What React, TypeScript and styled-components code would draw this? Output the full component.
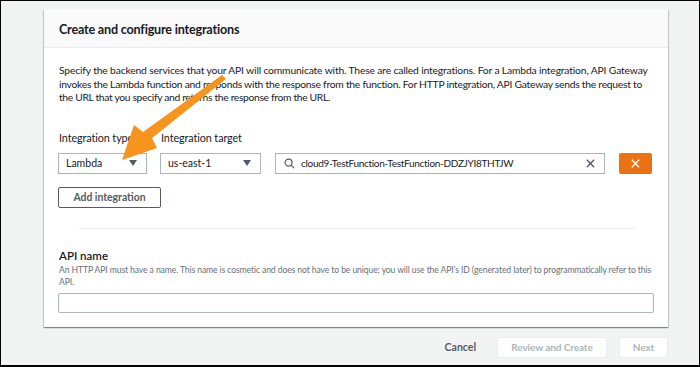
import React from 'react'
import styled, {createGlobalStyle} from 'styled-components'

const GlobalStyle = createGlobalStyle`
  html, body {
    margin: 0;
    padding: 0;
    background: #000;
  }
  * {
    box-sizing: border-box;
  }
`

const Page = styled.div`
  position: relative;
  width: 700px;
  height: 367px;
  border: 1px solid #000;
  border-bottom-width: 2px;
  background: #f2f3f3;
  padding: 8px 31px 0 43px;
  font-family: Lato, 'Liberation Sans', sans-serif;
  color: #16191f;
  overflow: hidden;
`

const Card = styled.section`
  background: #fff;
  box-shadow: 0 1px 1px 0 rgba(0, 28, 36, 0.3), 1px 1px 1px 0 rgba(0, 28, 36, 0.15), -1px 1px 1px 0 rgba(0, 28, 36, 0.15);
`

const CardHeader = styled.header`
  height: 39px;
  display: flex;
  align-items: center;
  padding: 3px 15px 0;
  background: #fafafa;
  border-bottom: 1px solid #eaeded;
`

const Title = styled.h2`
  margin: 0;
  font-size: 12.6px;
  font-weight: 700;
  letter-spacing: -0.2px;
  white-space: nowrap;
`

const CardBody = styled.div`
  padding: 16px 14px 14px 15px;
`

const Description = styled.p`
  margin: 0;
  font-size: 10.3px;
  line-height: 13.5px;
  white-space: nowrap;
`

const Line = styled.span<{ $spacing: number }>`
  display: block;
  letter-spacing: ${(p) => p.$spacing}px;
`

const FieldRow = styled.div`
  display: flex;
  align-items: flex-end;
  gap: 14px;
  margin-top: 25px;
`

const Field = styled.div`
  display: flex;
  flex-direction: column;
  gap: 7px;
`

const Label = styled.label`
  font-size: 10.8px;
  letter-spacing: -0.1px;
  line-height: 16px;
  white-space: nowrap;
`

const Select = styled.div<{ $width: number }>`
  width: ${(p) => p.$width}px;
  height: 21px;
  display: flex;
  align-items: center;
  justify-content: space-between;
  padding: 0 8px 0 7px;
  border: 1px solid #aab7b8;
  font-size: 10.5px;
  margin-left: -1px;
`

const Caret = styled.span`
  width: 0;
  height: 0;
  border-left: 4px solid transparent;
  border-right: 4px solid transparent;
  border-top: 6px solid #545b64;
  margin-right: 1px;
`

const SearchBox = styled.div`
  width: 330px;
  height: 21px;
  display: flex;
  align-items: center;
  gap: 6px;
  padding: 0 8px 0 8px;
  border: 1px solid #aab7b8;
  font-size: 10px;
  letter-spacing: -0.3px;
`

const SearchText = styled.span`
  flex: 1;
  white-space: nowrap;
`

const RemoveButton = styled.button`
  width: 33px;
  height: 21px;
  border: none;
  border-radius: 2px;
  background: #ec7211;
  display: flex;
  align-items: center;
  justify-content: center;
  padding: 0;
`

const SecondaryButton = styled.button`
  margin-top: 13px;
  margin-left: -1px;
  height: 21px;
  width: 103px;
  padding: 0;
  border: 1px solid #545b64;
  border-radius: 2px;
  background: #fff;
  font-family: inherit;
  font-size: 10.4px;
  font-weight: 700;
  color: #545b64;
`

const Divider = styled.hr`
  margin: 20px 19px 0 20px;
  border: none;
  border-top: 1px solid #eaeded;
`

const NameLabel = styled.div`
  margin-top: 19px;
  font-size: 11.5px;
  font-weight: 600;
  line-height: 16px;
`

const Hint = styled.div`
  font-size: 8.6px;
  letter-spacing: -0.1px;
  line-height: 12px;
  color: #687078;
  white-space: nowrap;
`

const TextInput = styled.div`
  margin-top: 5px;
  margin-left: -1px;
  height: 20px;
  border: 1px solid #aab7b8;
  border-radius: 2px;
`

const Footer = styled.footer`
  display: flex;
  justify-content: flex-end;
  align-items: center;
  gap: 12px;
  margin-top: 10px;
`

const LinkButton = styled.button`
  border: none;
  background: none;
  padding: 0;
  font-family: inherit;
  font-size: 10.5px;
  font-weight: 700;
  color: #545b64;
  margin-right: 9px;
`

const DisabledButton = styled.button<{ $width: number }>`
  width: ${(p) => p.$width}px;
  height: 21px;
  padding: 0;
  border: 1px solid #eaeded;
  border-radius: 2px;
  background: #fff;
  font-family: inherit;
  font-size: 10px;
  letter-spacing: -0.1px;
  font-weight: 700;
  color: #aab7b8;
  white-space: nowrap;
`

const Arrow = styled.svg`
  position: absolute;
  left: 0;
  top: 0;
  pointer-events: none;
`

const XIcon = ({color, size}: {color: string; size: number}) => (
  <svg width={size} height={size} viewBox="0 0 12 12">
    <path d="M2 2 L10 10 M10 2 L2 10" stroke={color} strokeWidth="1.5" fill="none" />
  </svg>
)

const App: React.FC = () => {
  return (
    <>
      <GlobalStyle />
      <Page>
        <Card>
          <CardHeader>
            <Title>Create and configure integrations</Title>
          </CardHeader>
          <CardBody>
            <Description>
              <Line $spacing={-0.15}>
                Specify the backend services that your API will communicate with. These are called integrations. For a Lambda integration, API Gateway
              </Line>
              <Line $spacing={-0.25}>
                invokes the Lambda function and responds with the response from the function. For HTTP integration, API Gateway sends the request to
              </Line>
              <Line $spacing={-0.33}>the URL that you specify and returns the response from the URL.</Line>
            </Description>
            <FieldRow>
              <Field>
                <Label>Integration type</Label>
                <Select $width={89}>
                  Lambda
                  <Caret />
                </Select>
              </Field>
              <Field>
                <Label>Integration target</Label>
                <Select $width={101}>
                  us-east-1
                  <Caret />
                </Select>
              </Field>
              <SearchBox>
                <svg width="11" height="11" viewBox="0 0 12 12">
                  <circle cx="5" cy="5" r="3.8" stroke="#545b64" strokeWidth="1.3" fill="none" />
                  <path d="M7.8 7.8 L11 11" stroke="#545b64" strokeWidth="1.3" />
                </svg>
                <SearchText>cloud9-TestFunction-TestFunction-DDZJYI8THTJW</SearchText>
                <XIcon color="#545b64" size={11} />
              </SearchBox>
              <RemoveButton>
                <XIcon color="#fff" size={11} />
              </RemoveButton>
            </FieldRow>
            <SecondaryButton>Add integration</SecondaryButton>
            <Divider />
            <NameLabel>API name</NameLabel>
            <Hint>
              An HTTP API must have a name. This name is cosmetic and does not have to be unique; you will use the API's ID (generated later) to programmatically refer to this
              <br />
              API.
            </Hint>
            <TextInput />
          </CardBody>
        </Card>
        <Footer>
          <LinkButton>Cancel</LinkButton>
          <DisabledButton $width={110}>Review and Create</DisabledButton>
          <DisabledButton $width={49}>Next</DisabledButton>
        </Footer>
        <Arrow width="700" height="367" viewBox="0 0 700 367">
          <path d="M221 74 L225 78 L151 137 L156 147 L121 159 L133 124 L142 131 Z" fill="#f7941d" />
        </Arrow>
      </Page>
    </>
  )
}

export default App
